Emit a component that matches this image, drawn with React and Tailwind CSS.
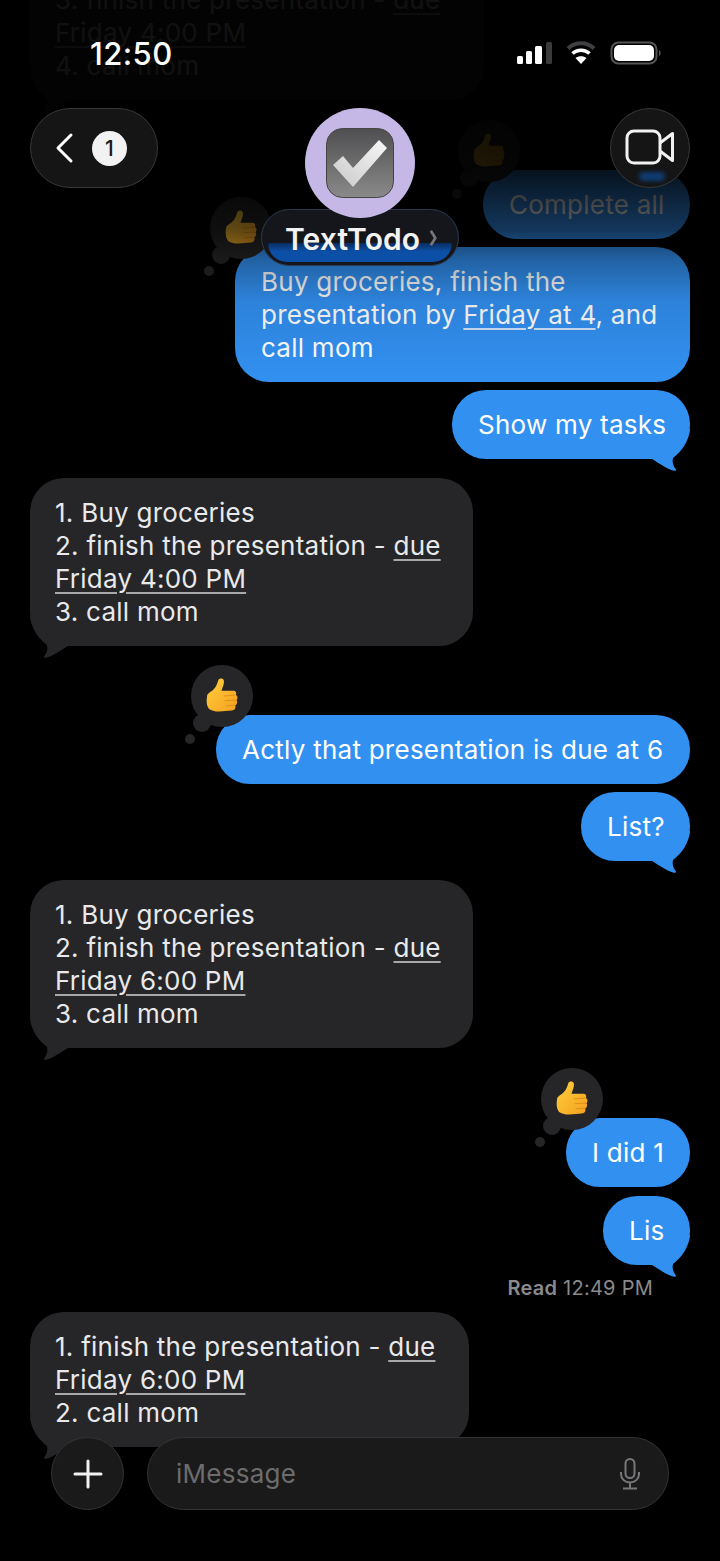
import React from "react";

function Thumb({ className }) {
  return (
    <svg viewBox="0 0 31 34" className={className}>
      <defs>
        <linearGradient id="thumbGrad" x1="0" y1="0" x2="1" y2="1">
          <stop offset="0" stopColor="#ffcf3f" />
          <stop offset="1" stopColor="#f5a01f" />
        </linearGradient>
      </defs>
      <path d="M1 18C1 15 4 14 7 11.500C10 8.500 11 5 12 2C13 0 16.500 0 17.300 2.500C18 5.500 16 9 15 12.500L26 12.500C29 12.500 30 14.500 29 16.500C31 17.500 31 20.500 29.500 21.500C31 23 30 25.500 28.500 26.500C29 29.500 28 31.500 25 31.500L13 32.500C8 32.500 5 31.500 3 30C1 28 0 23 1 18Z" fill="url(#thumbGrad)" />
      <path d="M17 17.500L28.500 16.500M18 22L29 21.500M19 27L28 26.500" stroke="#dc8a14" strokeWidth="0.800" fill="none" />
    </svg>
  );
}

function Reaction() {
  return (
    <div className="absolute left-[-25px] top-[-50px] w-[62px] h-[62px] rounded-full bg-[#262628] flex items-center justify-center">
      <Thumb className="w-[32px] h-[35px] -mt-[2px]" />
      <div className="absolute left-[2px] top-[49px] w-[18px] h-[18px] rounded-full bg-[#262628]" />
      <div className="absolute left-[-6px] top-[69px] w-[10px] h-[10px] rounded-full bg-[#262628]" />
    </div>
  );
}

function TailShape({ color, className }) {
  return (
    <svg viewBox="0 -30 40 44" className={className}>
      <path d="M0 -30C1 -18 8 -8 17 -1C18 3 17 7 14 10.500C14 12 15 12 17 11.500C25 9 31 4 38 0L38 -30Z" fill={color} />
    </svg>
  );
}

function Sent({ w, mt, children, reaction, tail }) {
  return (
    <div className={`relative self-end mr-[30px] rounded-[34px] bg-[#3290f1] text-white whitespace-nowrap px-[26px] py-[18px] ${w} ${mt}`}>
      {reaction && <Reaction />}
      {tail && <TailShape color="#3290f1" className="absolute right-0 bottom-[-14px] w-[40px] h-[44px] -scale-x-100" />}
      <div className="relative">{children}</div>
    </div>
  );
}

function Received({ w, mt, children }) {
  return (
    <div className={`relative self-start ml-[30px] rounded-[34px] bg-[#262628] text-[#e9e9eb] whitespace-nowrap pl-[25px] pr-[20px] py-[18px] ${w} ${mt}`}>
      <TailShape color="#262628" className="absolute left-0 bottom-[-14px] w-[40px] h-[44px]" />
      <div className="relative">{children}</div>
    </div>
  );
}

function Due({ children }) {
  return <span className="underline decoration-[#a8a8a8] decoration-[1.5px] underline-offset-[4px]">{children}</span>;
}

function StatusBar() {
  return (
    <div className="absolute top-0 left-0 right-0 h-[100px] z-30">
      <div className="absolute left-[90px] top-[35px] text-[31px] leading-[38px] font-medium tracking-[0.4px] text-white">12:50</div>
      <svg viewBox="0 0 150 30" className="absolute left-[515px] top-[39px] w-[150px] h-[30px]">
        <rect x="2" y="17" width="6" height="8" rx="1.500" fill="#fff" />
        <rect x="11" y="12" width="6" height="13" rx="1.500" fill="#fff" />
        <rect x="20" y="7" width="7" height="18" rx="1.500" fill="#fff" />
        <rect x="31" y="3" width="6" height="22" rx="1.500" fill="#3a3a3c" />
        <path d="M53 9.500C60 2.500 72 2.500 79 9.500" stroke="#3f3f41" strokeWidth="4" fill="none" />
        <path d="M57.500 14.500C62 10 70 10 74.500 14.500" stroke="#fff" strokeWidth="3.500" fill="none" />
        <path d="M66 25L60.500 19C63.500 16.500 68.500 16.500 71.500 19Z" fill="#fff" />
        <rect x="96.500" y="3.500" width="45" height="21" rx="7" fill="none" stroke="#555" strokeWidth="2" />
        <rect x="99" y="6" width="40" height="16" rx="5" fill="#fff" />
        <path d="M144 11C146 11.500 146 16.500 144 17Z" fill="#555" />
      </svg>
    </div>
  );
}

function Header() {
  return (
    <div className="absolute top-[108px] left-[30px] right-[30px] z-30 flex justify-between items-start">
      <div className="w-[128px] h-[80px] rounded-[40px] bg-[#151515] border border-[#383838] flex items-center pl-[23px] gap-[18px]">
        <svg viewBox="0 0 20 32" className="w-[20px] h-[32px]">
          <path d="M17 3L4 16L17 29" stroke="#fff" strokeWidth="3" strokeLinecap="round" strokeLinejoin="round" fill="none" />
        </svg>
        <div className="w-[35px] h-[35px] rounded-full bg-[#f2f2f2] text-[#1a1a1a] text-[21px] leading-[35px] text-center font-medium">1</div>
      </div>
      <div className="relative w-[80px] h-[80px] rounded-full bg-[#151515] border border-[#383838] overflow-hidden flex items-center justify-center">
        <div className="absolute left-[28px] bottom-[6px] w-[26px] h-[9px] rounded-full bg-[#0f3c72] blur-[2px]" />
        <svg viewBox="0 0 50 36" className="relative w-[50px] h-[36px] -mt-[2px]">
          <rect x="2" y="2" width="33" height="32" rx="7" stroke="#f2f2f2" strokeWidth="3" fill="none" />
          <path d="M35 14L47.500 4.500V31.500L35 22" stroke="#f2f2f2" strokeWidth="3" strokeLinejoin="round" fill="none" />
        </svg>
      </div>
    </div>
  );
}

function Contact() {
  return (
    <div className="absolute top-[108px] left-[261px] w-[198px] z-30 flex flex-col items-center">
      <div className="relative z-10 w-[110px] h-[110px] rounded-full bg-[#c5b8e6] flex items-center justify-center">
        <svg viewBox="0 0 68 70" className="w-[68px] h-[70px]">
          <defs>
            <linearGradient id="boxGrad" x1="0" y1="0" x2="0" y2="1">
              <stop offset="0" stopColor="#4f4f51" />
              <stop offset="1" stopColor="#8a8a8a" />
            </linearGradient>
            <linearGradient id="checkGrad" x1="0" y1="1" x2="1" y2="0">
              <stop offset="0" stopColor="#c9c9c9" />
              <stop offset="1" stopColor="#f7f7f7" />
            </linearGradient>
          </defs>
          <rect x="0.500" y="0.500" width="67" height="69" rx="16" fill="url(#boxGrad)" stroke="#444" />
          <path d="M7 37L17 28L27 40L53 12L61 20L27 59Z" fill="url(#checkGrad)" />
        </svg>
      </div>
      <div className="relative -mt-[9px] w-[198px] h-[57px] rounded-[29px] bg-[#14161b] border border-[#2b3a50] overflow-hidden flex items-center pl-[23px] gap-[9px]">
        <div className="absolute left-[6px] right-[6px] bottom-[3px] h-[19px] rounded-b-[20px] bg-[linear-gradient(to_bottom,#0a2c5e,#0c4fa6_45%)] blur-[0.5px]" />
        <span className="relative text-[30px] leading-[36px] font-semibold tracking-[0.1px] text-[#f2f2f2] mt-[2px]">TextTodo</span>
        <svg viewBox="0 0 10 20" className="relative w-[9px] h-[18px]">
          <path d="M2 2L7 10L2 18" stroke="#77777a" strokeWidth="3" fill="none" />
        </svg>
      </div>
    </div>
  );
}

function InputBar() {
  return (
    <div className="absolute top-[1437px] left-[51px] z-30 flex gap-[23px]">
      <div className="w-[73px] h-[73px] rounded-full bg-[#1a1a1a] border border-[#333335] flex items-center justify-center">
        <svg viewBox="0 0 30 30" className="w-[30px] h-[30px]">
          <path d="M15 2V28M2 15H28" stroke="#f2f2f2" strokeWidth="3" strokeLinecap="round" />
        </svg>
      </div>
      <div className="w-[522px] h-[73px] rounded-[37px] bg-[#1a1a1a] border border-[#333335] flex items-center justify-between pl-[28px] pr-[27px]">
        <span className="text-[#6c6c6e]">iMessage</span>
        <svg viewBox="0 0 22 32" className="w-[22px] h-[32px]">
          <rect x="6.500" y="1" width="9" height="19" rx="4.500" stroke="#77777a" strokeWidth="2" fill="none" />
          <path d="M2 14V16C2 21 6 24.500 11 24.500C16 24.500 20 21 20 16V14M11 24.500V30.500M4 30.500H18" stroke="#77777a" strokeWidth="2" fill="none" />
        </svg>
      </div>
    </div>
  );
}

export default function App() {
  return (
    <div className="relative w-[720px] h-[1561px] overflow-hidden bg-black font-['Inter',sans-serif] text-[26px] leading-[33px] tracking-[0.25px]">
      <div className="flex flex-col -mt-[35px]">
        <Received w="w-[454px]" mt="mt-0">
          3. finish the presentation - <Due>due</Due>
          <br />
          <Due>Friday 4:00 PM</Due>
          <br />
          4. call mom
        </Received>
        <Sent w="w-[207px]" mt="mt-[70px]" reaction>Complete all</Sent>
        <Sent w="w-[455px]" mt="mt-[8px]" reaction>
          Buy groceries, finish the
          <br />
          presentation by <span className="underline decoration-[1.5px] underline-offset-[4px] decoration-[#cfe3fb]">Friday at 4</span>, and
          <br />
          call mom
        </Sent>
        <Sent w="w-[238px]" mt="mt-[8px]" tail>Show my tasks</Sent>
        <Received w="w-[443px]" mt="mt-[19px]">
          1. Buy groceries
          <br />
          2. finish the presentation - <Due>due</Due>
          <br />
          <Due>Friday 4:00 PM</Due>
          <br />
          3. call mom
        </Received>
        <Sent w="w-[474px]" mt="mt-[69px]" reaction>Actly that presentation is due at 6</Sent>
        <Sent w="w-[109px]" mt="mt-[8px]" tail>List?</Sent>
        <Received w="w-[443px]" mt="mt-[19px]">
          1. Buy groceries
          <br />
          2. finish the presentation - <Due>due</Due>
          <br />
          <Due>Friday 6:00 PM</Due>
          <br />
          3. call mom
        </Received>
        <Sent w="w-[124px]" mt="mt-[70px]" reaction>I did 1</Sent>
        <Sent w="w-[87px]" mt="mt-[9px]" tail>Lis</Sent>
        <div className="self-end mr-[67px] mt-[11px] text-[20px] leading-[24px] text-[#8a8a8c]">
          <span className="font-semibold">Read</span> 12:49 PM
        </div>
        <Received w="w-[439px]" mt="mt-[12px]">
          1. finish the presentation - <Due>due</Due>
          <br />
          <Due>Friday 6:00 PM</Due>
          <br />
          2. call mom
        </Received>
      </div>
      <div className="absolute top-0 left-0 right-0 h-[390px] z-20 bg-[linear-gradient(to_bottom,rgba(0,0,0,0.93)_0,rgba(0,0,0,0.93)_100px,rgba(0,0,0,0.88)_170px,rgba(0,0,0,0.62)_230px,rgba(0,0,0,0.32)_260px,rgba(0,0,0,0.1)_300px,rgba(0,0,0,0)_380px)]" />
      <StatusBar />
      <Header />
      <Contact />
      <InputBar />
    </div>
  );
}
